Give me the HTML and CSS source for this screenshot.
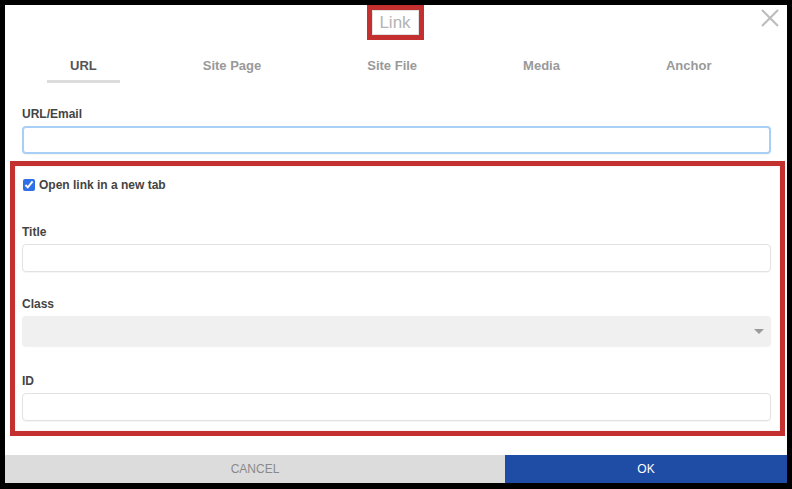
FILE: index.html
```html
<!DOCTYPE html>
<html>
<head>
  <meta charset="utf-8">
  <meta name="viewport" content="width=device-width, initial-scale=1">
  <title>Link</title>
  <link rel="stylesheet" href="styles.css">
</head>
<body>
  <div class="dialog">
    <header class="dialog-head">
      <h2 class="dialog-title"><span>Link</span></h2>
      <button class="close-btn" aria-label="Close">
        <svg width="18" height="18" viewBox="0 0 18 18"><path d="M1 1L17 17M17 1L1 17" stroke="#bdbdbd" stroke-width="2.2" fill="none"/></svg>
      </button>
    </header>

    <nav class="tabs">
      <div class="tab active">URL</div>
      <div class="tab">Site Page</div>
      <div class="tab">Site File</div>
      <div class="tab">Media</div>
      <div class="tab">Anchor</div>
    </nav>

    <div class="dialog-body">
      <label class="field-label">URL/Email</label>
      <input class="text-input focus" type="text">

      <div class="highlight">
        <label class="check-row"><input type="checkbox" checked> Open link in a new tab</label>

        <label class="field-label">Title</label>
        <input class="text-input" type="text">

        <label class="field-label">Class</label>
        <div class="select-wrap">
          <select class="select-input" disabled><option></option></select>
        </div>

        <label class="field-label">ID</label>
        <input class="text-input" type="text">
      </div>
    </div>

    <footer class="dialog-foot">
      <button class="btn cancel">CANCEL</button>
      <button class="btn ok">OK</button>
    </footer>
  </div>
</body>
</html>
```

FILE: styles.css
```css
body {
  margin: 0;
  padding: 5px;
  background: #000;
  font-family: 'Liberation Sans', Arial, sans-serif;
}

.dialog {
  background: white;
  width: 782px;
  height: 478px;
  position: relative;
  display: flex;
  flex-direction: column;
}

.dialog-head {
  height: 40px;
  display: flex;
  justify-content: center;
}

.dialog-title {
  margin: 0 0 0 -2px;
  width: 57px;
  height: 35px;
  box-sizing: border-box;
  border: 5px solid #c3302f;
  display: flex;
}

.dialog-title span {
  flex: 1;
  font-size: 17px;
  font-weight: normal;
  color: #b4b4b4;
  border: 1px solid #e2e2e2;
  line-height: 23px;
  text-align: center;
}

.close-btn {
  position: absolute;
  top: 4px;
  right: 8px;
  border: none;
  background: none;
  padding: 0;
  width: 18px;
  height: 18px;
}

.tabs {
  display: flex;
  gap: 60px;
  padding-left: 42px;
}

.tab {
  padding: 13px 23px 6px;
  font-size: 13px;
  font-weight: bold;
  line-height: 16px;
  color: #999;
  border-bottom: 3px solid transparent;
}

.tab.active {
  color: #555;
  border-bottom-color: #dcdcdc;
}

.dialog-body {
  padding: 24px 16px 0 17px;
  flex: 1;
}

.field-label {
  display: block;
  font-size: 12px;
  font-weight: bold;
  color: #444;
  line-height: 14px;
  margin-bottom: 5px;
}

.text-input {
  display: block;
  width: 100%;
  height: 28px;
  box-sizing: border-box;
  border: 1px solid #e2e2e2;
  border-radius: 4px;
  background: #fff;
  box-shadow: 0 1px 1px rgba(0,0,0,0.04);
  margin: 0;
}

.text-input.focus {
  border: 2px solid #a8cff5;
}

.highlight {
  margin: 7px -14px 0 -12px;
  border: 5px solid #c3302f;
  padding: 12px 9px 10px 7px;
  box-shadow: inset 0 0 2px rgba(0,0,0,0.12);
}

.check-row {
  display: flex;
  align-items: center;
  gap: 4px;
  font-size: 12px;
  font-weight: bold;
  color: #444;
  line-height: 14px;
  margin-bottom: 33px;
}

.check-row input {
  margin: 0 0 0 1px;
  width: 12px;
  height: 12px;
  accent-color: #2f6fe8;
}

.highlight .text-input + .field-label {
  margin-top: 25px;
}

.select-wrap {
  position: relative;
  margin-bottom: 28px;
}

.select-wrap::after {
  content: "";
  position: absolute;
  right: 7px;
  top: 13px;
  border-left: 5px solid transparent;
  border-right: 5px solid transparent;
  border-top: 5px solid #9a9a9a;
}

.select-input {
  display: block;
  width: 100%;
  height: 30px;
  appearance: none;
  -webkit-appearance: none;
  border: none;
  border-radius: 4px;
  background: #ebebeb;
  box-shadow: 0 1px 1px rgba(0,0,0,0.08);
  margin: 0;
}

.dialog-foot {
  display: flex;
  height: 28px;
}

.btn {
  border: none;
  font-family: inherit;
  font-size: 12px;
  padding: 0;
  height: 28px;
}

.btn.cancel {
  width: 500px;
  background: #dcdcdc;
  color: #8a8a8a;
}

.btn.ok {
  flex: 1;
  background: #1f4ca5;
  color: white;
}
```
